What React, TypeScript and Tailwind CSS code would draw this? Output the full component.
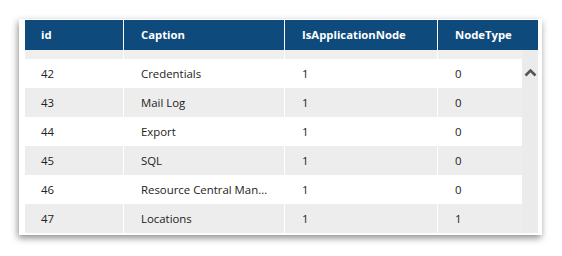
import React from "react";

const rows = [
  ["42", "Credentials", "1", "0"],
  ["43", "Mail Log", "1", "0"],
  ["44", "Export", "1", "0"],
  ["45", "SQL", "1", "0"],
  ["46", "Resource Central Man...", "1", "0"],
  ["47", "Locations", "1", "1"],
];

export default function App() {
  return (
    <div className="w-[562px] h-[256px] bg-white pt-[19px] pl-[19px]" style={{ fontFamily: '"Open Sans", "Noto Sans", sans-serif' }}>
      <div className="w-[523px] h-[216px] bg-white pl-[6px] pr-[4px] pt-[1px] pb-[2px] shadow-[-1px_3px_7px_rgba(0,0,0,0.45)] flex flex-col">
        <div className="flex h-[30px] bg-[#0f4a7c] text-white font-bold text-[11.3px] items-center">
          <div className="w-[99px] h-full flex items-center pl-[16px] pt-[1px] border-r border-white">id</div>
          <div className="w-[161px] h-full flex items-center pl-[17px] pt-[1px] border-r border-white">Caption</div>
          <div className="w-[153px] h-full flex items-center pl-[17px] pt-[1px] border-r border-white">IsApplicationNode</div>
          <div className="flex-1 h-full flex items-center pl-[17px] pt-[1px]">NodeType</div>
        </div>
        <div className="flex flex-1">
          <div className="flex flex-col w-[497px]">
            <div className="flex h-[9px] bg-[#efefef]">
              <div className="w-[99px] border-r border-white" />
              <div className="w-[161px] border-r border-white" />
              <div className="w-[153px] border-r border-white" />
              <div className="flex-1" />
            </div>
            {rows.map((r, i) => (
              <div key={r[0]} className={`flex h-[29px] items-center text-[11.4px] text-[#222] ${i % 2 === 0 ? "bg-white" : "bg-[#ededed]"}`}>
                <div className="w-[99px] h-full flex items-center pl-[16px] pt-[1px] border-r border-white">{r[0]}</div>
                <div className="w-[161px] h-full flex items-center pl-[17px] pt-[1px] border-r border-white">{r[1]}</div>
                <div className="w-[153px] h-full flex items-center pl-[17px] pt-[1px] border-r border-white">{r[2]}</div>
                <div className="flex-1 h-full flex items-center pl-[17px] pt-[1px]">{r[3]}</div>
              </div>
            ))}
          </div>
          <div className="flex-1 bg-[#ebebeb] flex justify-center pt-[18px]">
            <svg width="13" height="9" viewBox="0 0 13 9">
              <path d="M1.5 7.5 L6.5 2.5 L11.5 7.5" fill="none" stroke="#555" strokeWidth="2.6" />
            </svg>
          </div>
        </div>
      </div>
    </div>
  );
}
